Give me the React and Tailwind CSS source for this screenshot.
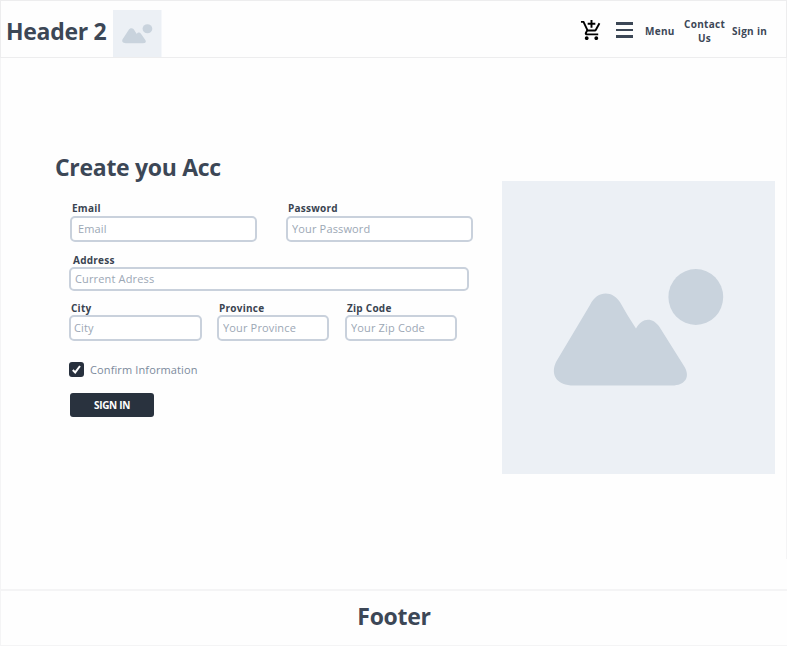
import React from "react";
import { MdAddShoppingCart } from "react-icons/md";

function Picture({ className }) {
  return (
    <svg className={className} viewBox="0 0 273 293" preserveAspectRatio="none">
      <rect width="273" height="293" fill="#ecf0f5" />
      <ellipse cx="193.8" cy="116" rx="27.4" ry="28" fill="#c9d3dd" />
      <path
        d="M88 124 C95 109 111 109 118.500 122 Q125 134 134 147.500 C140 136 151 136 157.500 146 L182 185 C189 196 183 204.500 170 204.500 L72 204.500 C55 204.500 48 194 54 181 Z"
        fill="#c9d3dd"
      />
    </svg>
  );
}

function Field({ label, placeholder, box, labelClass, inputClass }) {
  return (
    <label className={`flex flex-col ${box}`}>
      <span className={`h-4 text-[10px] leading-[17px] font-bold tracking-[0.25px] whitespace-nowrap text-[#3a4451] ${labelClass}`}>
        {label}
      </span>
      <input
        placeholder={placeholder}
        className={`w-full rounded-[5px] border-2 border-[#c9d1dc] bg-white pb-px text-[11px] tracking-[0.15px] outline-none placeholder:text-[#9ca7b5] ${inputClass}`}
      />
    </label>
  );
}

export default function App() {
  return (
    <div className="flex h-[646px] w-[787px] flex-col overflow-hidden bg-[#fefefe] font-['Open_Sans',sans-serif] text-[#3c4756]">
      <header className="flex h-[58px] shrink-0 border border-[#ededee] pl-[5px]">
        <h1 className="mt-[14px] w-[107px] text-[23px] leading-8 font-bold whitespace-nowrap tracking-[-0.3px]">Header 2</h1>
        <Picture className="mt-[8.5px] h-[47.5px] w-[48.5px]" />
        <nav className="ml-auto flex h-[60px] items-center pr-[18px] text-[10px] leading-[14px] font-bold tracking-[0.3px]">
          <MdAddShoppingCart className="mr-[13px] mb-[2px] size-[23px] text-black" />
          <div className="mr-3 mb-[2px] flex w-[17px] flex-col gap-[4px]">
            <span className="h-[2.4px] bg-[#3c4756]" />
            <span className="h-[2.4px] bg-[#3c4756]" />
            <span className="h-[2.4px] bg-[#3c4756]" />
          </div>
          <a className="w-[30px] whitespace-nowrap">Menu</a>
          <a className="mr-[7px] ml-[9px] w-[41px] text-center">Contact Us</a>
          <a className="w-[36px] whitespace-nowrap">Sign in</a>
        </nav>
      </header>

      <main className="flex h-[531px] shrink-0 border-l border-[#f4f4f5]">
        <form className="w-[501px] shrink-0 pt-[93px]">
          <h2 className="ml-[54px] h-[49px] text-[23px] leading-8 font-bold whitespace-nowrap tracking-[-0.3px]">Create you Acc</h2>
          <div className="ml-[69px] flex h-[52px] gap-[30px]">
            <Field label="Email" placeholder="Email" box="w-[187px]" labelClass="pl-[2px]" inputClass="h-[25.5px] pl-[6px]" />
            <Field label="Password" placeholder="Your Password" box="-ml-px w-[187px]" labelClass="pl-[2px]" inputClass="h-[25.5px] pl-[4px]" />
          </div>
          <div className="ml-[68px] flex h-12">
            <Field label="Address" placeholder="Current Adress" box="w-[400px]" labelClass="-mb-px pl-[4px]" inputClass="h-6 pl-[4px]" />
          </div>
          <div className="ml-[68px] flex h-[62px]">
            <Field label="City" placeholder="City" box="mr-[15px] w-[133px]" labelClass="-mb-px pl-[2px]" inputClass="h-[26px] pl-[3px]" />
            <Field label="Province" placeholder="Your Province" box="mr-[16px] w-[112px]" labelClass="-mb-px pl-[2px]" inputClass="h-[26px] pl-[4px]" />
            <Field label="Zip Code" placeholder="Your Zip Code" box="w-[112px]" labelClass="-mb-px pl-[2px]" inputClass="h-[26px] pl-[4px]" />
          </div>
          <div className="ml-[68px] flex h-[31px] gap-[6px]">
            <span className="flex size-[15px] items-center justify-center rounded-[3px] bg-[#27303d]">
              <svg className="size-[11px]" viewBox="0 0 11 11" fill="none" stroke="white" strokeWidth="2">
                <path d="M1.800 6 L4.200 8.400 L9 2" />
              </svg>
            </span>
            <span className="text-[11px] leading-4 tracking-[0.12px] whitespace-nowrap text-[#7c8a9c]">Confirm Information</span>
          </div>
          <button type="button" className="ml-[69px] flex h-6 w-[84px] items-center justify-center rounded-[3px] bg-[#29323e] text-[10px] font-bold tracking-[-0.3px] text-white">
            SIGN IN
          </button>
        </form>
        <Picture className="mt-[123px] h-[293px] w-[273px]" />
        <div className="ml-auto h-[501px] w-px bg-[#f4f4f5]" />
      </main>

      <footer className="h-[57px] shrink-0 border-t-2 border-b border-l border-[#f4f4f5]">
        <h2 className="mt-[9px] text-center text-[23px] leading-8 font-bold tracking-[-0.3px]">Footer</h2>
      </footer>
    </div>
  );
}
